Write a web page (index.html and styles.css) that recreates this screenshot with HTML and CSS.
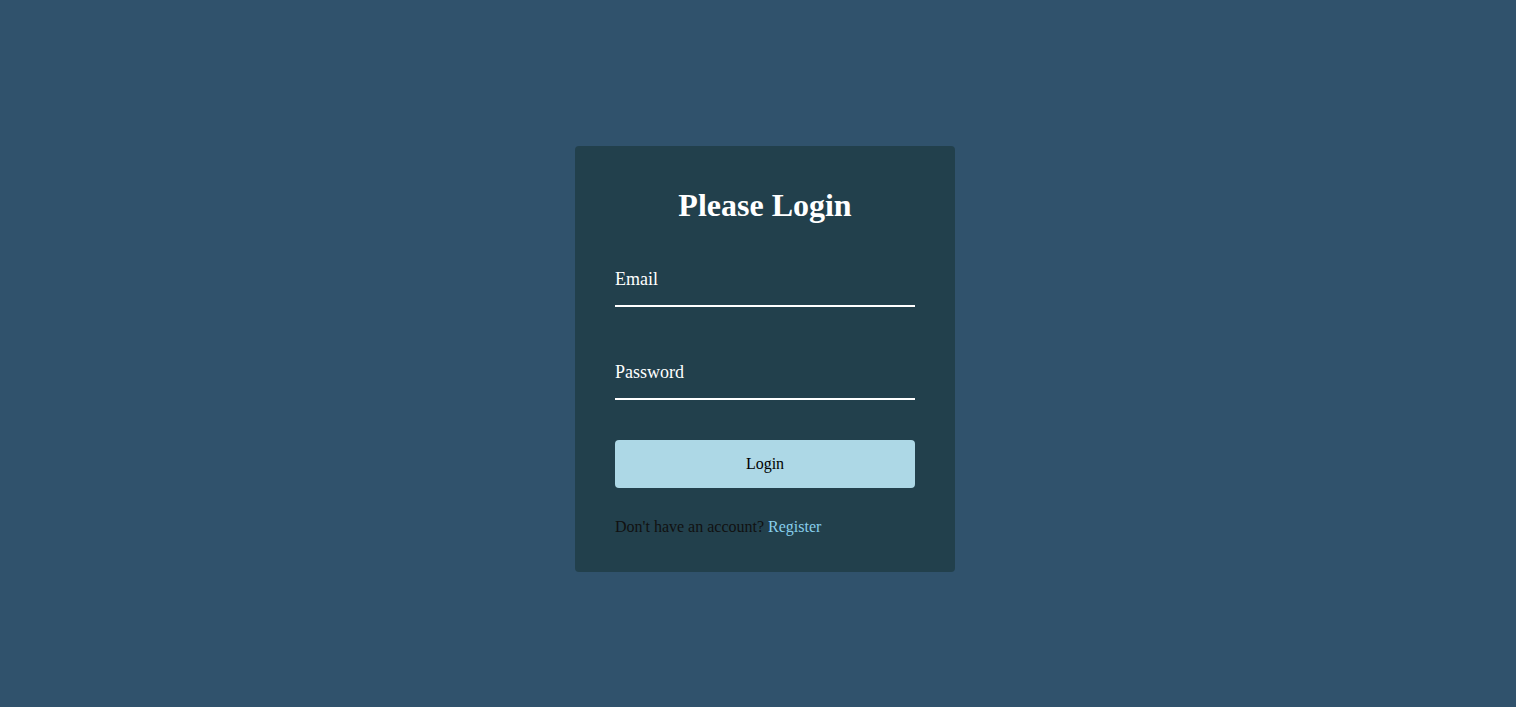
FILE: index.html
```html
<!DOCTYPE html>
<html lang="en">
<head>
<meta charset="utf-8">
<title>Login</title>
<link rel="stylesheet" href="styles.css">
</head>
<body>
  <main class="page">
    <form class="card">
      <h1 class="title">Please Login</h1>
      <input class="field" type="email" placeholder="Email">
      <input class="field field-password" type="password" placeholder="Password">
      <button class="btn" type="button">Login</button>
      <p class="note">Don't have an account? <a class="link" href="#">Register</a></p>
    </form>
  </main>
</body>
</html>
```
FILE: styles.css
```css
html, body {
  margin: 0;
  padding: 0;
  height: 100%;
}
body {
  background: #30526c;
  font-family: "Liberation Serif", "Times New Roman", serif;
}
.page {
  display: flex;
  justify-content: center;
  padding-top: 146px;
  padding-left: 14px;
}
.card {
  width: 300px;
  padding: 41px 40px 36px;
  background: #22404c;
  border-radius: 4px;
  display: flex;
  flex-direction: column;
}
.title {
  margin: 0 0 30px;
  font-size: 32px;
  font-weight: bold;
  text-align: center;
  color: #ffffff;
}
.field {
  display: block;
  width: 100%;
  box-sizing: border-box;
  background: transparent;
  border: none;
  border-bottom: 2px solid #ffffff;
  outline: none;
  color: #ffffff;
  font-family: "Liberation Serif", "Times New Roman", serif;
  font-size: 18px;
  padding: 15px 0;
  margin: 0;
}
.field::placeholder {
  color: #ffffff;
  opacity: 1;
}
.field-password {
  margin-top: 40px;
}
.btn {
  margin-top: 40px;
  height: 48px;
  border: none;
  border-radius: 4px;
  background: #add8e6;
  color: #000000;
  font-family: "Liberation Serif", "Times New Roman", serif;
  font-size: 16px;
  cursor: pointer;
}
.note {
  margin: 30px 0 0;
  font-size: 16px;
  color: #111111;
}
.link {
  color: #87ceeb;
  text-decoration: none;
}
```
